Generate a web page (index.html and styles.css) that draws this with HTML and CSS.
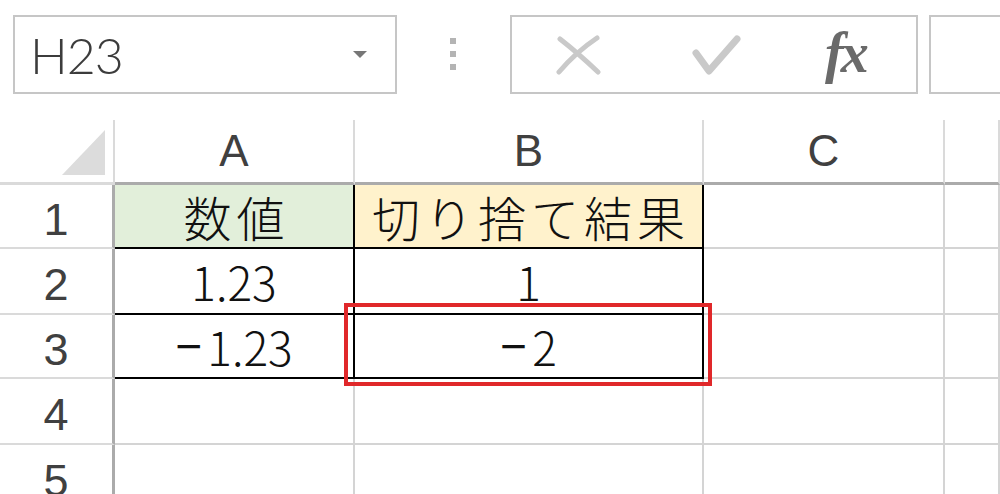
FILE: index.html
```html
<!DOCTYPE HTML>
<html lang="ja">
	<head>
		<meta charset="UTF-8">
		<title>切り捨て</title>
		<link rel="stylesheet" href="styles.css">
	</head>
	<body>
		<div class="toolbar">
			<div class="namebox">
				<span class="name">H23</span>
				<span class="caret"></span>
			</div>
			<div class="grip"><i></i><i></i><i></i></div>
			<div class="buttons">
				<svg class="cancel" width="45" height="42" viewBox="0 0 45 42">
					<path d="M4 5 Q22 19 42 38" />
					<path d="M3 38 Q20 18 41 4" />
				</svg>
				<svg class="enter" width="52" height="46" viewBox="0 0 52 46">
					<polyline points="5,21 18,39 46,7" />
				</svg>
				<span class="fx">fx</span>
			</div>
			<div class="formula"></div>
		</div>

		<div class="sheet">
			<div class="corner"><div class="tri"></div></div>
			<div class="colhead">A</div>
			<div class="colhead">B</div>
			<div class="colhead">C</div>
			<div class="colhead"></div>

			<div class="rowhead">1</div>
			<div class="cell green line-r line-b jp">数値</div>
			<div class="cell yellow line-r line-b jp">切り捨て結果</div>
			<div class="cell"></div>
			<div class="cell"></div>

			<div class="rowhead">2</div>
			<div class="cell line-r line-b">1.23</div>
			<div class="cell line-r line-b">1</div>
			<div class="cell"></div>
			<div class="cell"></div>

			<div class="rowhead">3</div>
			<div class="cell line-r line-b"><span class="minus">−</span>1.23</div>
			<div class="cell line-r line-b picked"><span class="minus">−</span>2<div class="mark"></div></div>
			<div class="cell"></div>
			<div class="cell"></div>

			<div class="rowhead">4</div>
			<div class="cell"></div>
			<div class="cell"></div>
			<div class="cell"></div>
			<div class="cell"></div>

			<div class="rowhead">5</div>
			<div class="cell"></div>
			<div class="cell"></div>
			<div class="cell"></div>
			<div class="cell"></div>
		</div>
	</body>
</html>
```
FILE: styles.css
```css
body {
	margin: 0;
	width: 1000px;
	height: 494px;
	overflow: hidden;
	background: #fff;
	font-family: "Liberation Sans", Arial, sans-serif;
}
.toolbar {
	height: 120px;
	box-sizing: border-box;
	padding: 15px 0 0 13px;
	display: flex;
	align-items: flex-start;
	white-space: nowrap;
}
.toolbar > * {
	flex-shrink: 0;
}
.namebox {
	width: 384px;
	height: 79px;
	box-sizing: border-box;
	border: 2px solid #c6c6c6;
	display: flex;
	align-items: center;
	padding-left: 15px;
}
.name {
	font-family: Lato, "Liberation Sans", sans-serif;
	font-weight: 300;
	font-size: 50px;
	letter-spacing: -1px;
	color: #3c3c3c;
}
.caret {
	margin-left: auto;
	margin-right: 28px;
	width: 0;
	height: 0;
	border-left: 7px solid transparent;
	border-right: 7px solid transparent;
	border-top: 7px solid #777;
}
.grip {
	margin: 23px 0 0 53px;
	display: flex;
	flex-direction: column;
	gap: 7px;
}
.grip i {
	display: block;
	width: 6px;
	height: 6px;
	background: #b4b4b4;
}
.buttons {
	margin-left: 54px;
	width: 408px;
	height: 79px;
	box-sizing: border-box;
	border: 2px solid #c6c6c6;
	display: flex;
	align-items: center;
}
.cancel {
	margin-left: 44px;
	fill: none;
	stroke: #c9c9c9;
	stroke-width: 5;
	stroke-linecap: round;
}
.enter {
	margin-left: 90px;
	fill: none;
	stroke: #c9c9c9;
	stroke-width: 7;
	stroke-linecap: round;
	stroke-linejoin: round;
}
.fx {
	margin-left: 82px;
	margin-bottom: 4px;
	font-family: "Liberation Serif", "Times New Roman", serif;
	font-style: italic;
	font-weight: bold;
	font-size: 56px;
	line-height: 1;
	color: #6a6a6a;
	letter-spacing: -3px;
}
.formula {
	margin-left: 11px;
	width: 100px;
	height: 79px;
	box-sizing: border-box;
	border: 2px solid #c6c6c6;
}
.sheet {
	display: grid;
	grid-template-columns: 115px 240px 349px 241px 1fr;
	grid-template-rows: 65px 64px 66px 64px 66px 66px;
}
.sheet > div {
	box-sizing: border-box;
	display: flex;
	align-items: center;
	justify-content: center;
}
.corner {
	border-right: 2px solid #dadada;
	border-bottom: 3px solid #dadada;
	justify-content: flex-end !important;
	align-items: flex-end !important;
	padding: 0 8px 7px 0;
}
.tri {
	width: 43px;
	height: 45px;
	background: #dcdcdc;
	clip-path: polygon(100% 0, 100% 100%, 0 100%);
}
.colhead {
	border-right: 2px solid #dadada;
	border-bottom: 3px solid #ababab;
	font-size: 44px;
	color: #404040;
}
.rowhead {
	border-right: 3px solid #ababab;
	border-bottom: 2px solid #dadada;
	font-size: 45px;
	color: #404040;
	padding-top: 8px;
}
.cell {
	border-right: 2px solid #d4d4d4;
	border-bottom: 2px solid #d4d4d4;
	font-family: "Noto Sans CJK JP", sans-serif;
	font-weight: 200;
	font-size: 46px;
	color: #111;
}
.minus {
	font-family: "Liberation Sans", sans-serif;
	margin-right: 5px;
}
.jp {
	font-size: 48px;
	letter-spacing: 5px;
	padding-left: 5px;
}
.green {
	background: #e2efda;
}
.yellow {
	background: #fff2cc;
}
.line-r {
	border-right-color: #000;
}
.line-b {
	border-bottom-color: #000;
}
.picked {
	position: relative;
}
.mark {
	position: absolute;
	left: -11px;
	top: -12px;
	right: -10px;
	bottom: -9px;
	border: 4px solid #e0282a;
	z-index: 2;
}
```
